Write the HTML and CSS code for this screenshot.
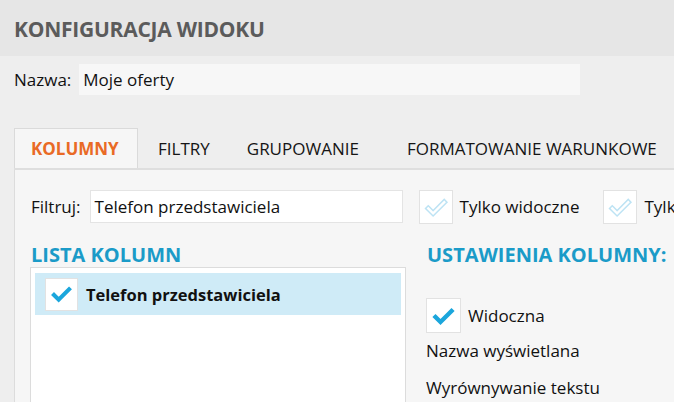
FILE: index.html
```html
<!DOCTYPE html>
<html lang="pl">
<head>
<meta charset="utf-8">
<title>Konfiguracja widoku</title>
<link rel="stylesheet" href="styles.css">
</head>
<body>
<header class="title-bar"><h1 class="title">KONFIGURACJA WIDOKU</h1></header>
<div class="name-row">
  <span class="label">Nazwa:</span>
  <div class="name-input">Moje oferty</div>
</div>
<nav class="tabs">
  <div class="tab tab-active">KOLUMNY</div>
  <div class="tab tab-filtry">FILTRY</div>
  <div class="tab tab-grup">GRUPOWANIE</div>
  <div class="tab tab-format">FORMATOWANIE WARUNKOWE</div>
</nav>
<section class="panel">
  <div class="filter-row">
    <span class="label">Filtruj:</span>
    <div class="filter-input">Telefon przedstawiciela</div>
    <span class="check check-light"><svg viewBox="0 0 33 33" width="33" height="33"><path d="M8.5 18.5 L13.5 23.5 L25 12" fill="none" stroke="#bde3f4" stroke-width="5.5" stroke-linecap="square"/><path d="M8.5 18.5 L13.5 23.5 L25 12" fill="none" stroke="#ffffff" stroke-width="2.4" stroke-linecap="square"/></svg></span>
    <span class="check-label">Tylko widoczne</span>
    <span class="check check-light check-second"><svg viewBox="0 0 33 33" width="33" height="33"><path d="M8.5 18.5 L13.5 23.5 L25 12" fill="none" stroke="#bde3f4" stroke-width="5.5" stroke-linecap="square"/><path d="M8.5 18.5 L13.5 23.5 L25 12" fill="none" stroke="#ffffff" stroke-width="2.4" stroke-linecap="square"/></svg></span>
    <span class="check-label">Tylko zaznaczone</span>
  </div>
  <div class="columns">
    <div class="col-left">
      <h2 class="section-title">LISTA KOLUMN</h2>
      <div class="list-box">
        <div class="list-row selected">
          <span class="check"><svg viewBox="0 0 33 33" width="32" height="32"><path d="M8.5 17.5 L13.5 22.5 L24.5 11.5" fill="none" stroke="#1ba6dc" stroke-width="4.4" stroke-linecap="square"/></svg></span>
          <span class="row-text">Telefon przedstawiciela</span>
        </div>
      </div>
    </div>
    <div class="col-right">
      <h2 class="section-title">USTAWIENIA KOLUMNY:</h2>
      <div class="setting-check">
        <span class="check"><svg viewBox="0 0 33 33" width="34" height="34"><path d="M8.5 17.5 L13.5 22.5 L24.5 11.5" fill="none" stroke="#1ba6dc" stroke-width="4.4" stroke-linecap="square"/></svg></span>
        <span class="check-label">Widoczna</span>
      </div>
      <div class="setting-label">Nazwa wyświetlana</div>
      <div class="setting-label setting-label-2">Wyrównywanie tekstu</div>
    </div>
  </div>
</section>
</body>
</html>
```

FILE: styles.css
```css
html, body {
  margin: 0;
  padding: 0;
}
body {
  width: 674px;
  height: 402px;
  overflow: hidden;
  background: #eeeeee;
  font-family: "Open Sans", "Noto Sans", "DejaVu Sans", sans-serif;
  color: #111111;
  font-size: 17px;
}
.title-bar {
  height: 56px;
  background: #e6e6e6;
  display: flex;
  align-items: center;
  padding-left: 14px;
}
.title {
  margin: 0;
  font-size: 21px;
  font-weight: 700;
  color: #5b5b5b;
  letter-spacing: -0.25px;
  padding-top: 2px;
  white-space: nowrap;
}
.name-row {
  display: flex;
  align-items: center;
  margin-top: 8px;
  padding-left: 14px;
  height: 31px;
}
.label {
  font-size: 17px;
  color: #111;
  flex: none;
}
.name-input {
  margin-left: 8px;
  width: 497px;
  height: 31px;
  padding-left: 4px;
  background: #f7f7f7;
  display: flex;
  align-items: center;
  font-size: 17px;
  flex: none;
}
.tabs {
  display: flex;
  margin-top: 33px;
  margin-left: 14px;
  height: 40px;
  border-bottom: 2px solid #dedede;
  white-space: nowrap;
  overflow: hidden;
}
.tab {
  display: flex;
  align-items: center;
  font-size: 17px;
  color: #151515;
  height: 40px;
  flex: none;
}
.tab-active {
  box-sizing: border-box;
  width: 124px;
  padding-left: 16px;
  background: #f6f6f6;
  border: 1px solid #dadada;
  border-bottom: none;
  color: #e96a25;
  font-weight: 700;
  height: 42px;
  margin-bottom: -2px;
  padding-bottom: 2px;
}
.tab-filtry { margin-left: 20px; }
.tab-grup { margin-left: 37px; }
.tab-format { margin-left: 48px; }
.panel {
  margin-left: 14px;
  background: #f6f6f6;
  border-left: 1px solid #dcdcdc;
  height: 213px;
  overflow: hidden;
  padding: 20px 0 0 16px;
}
.filter-row {
  display: flex;
  align-items: center;
  height: 33px;
  white-space: nowrap;
}
.filter-input {
  box-sizing: border-box;
  margin-left: 9px;
  width: 313px;
  height: 33px;
  background: #ffffff;
  border: 1px solid #e4e4e4;
  padding-left: 4px;
  display: flex;
  align-items: center;
  font-size: 17px;
  flex: none;
}
.check {
  box-sizing: border-box;
  display: inline-flex;
  align-items: center;
  justify-content: center;
  background: #ffffff;
  border: 1px solid #e2e2e2;
  flex: none;
}
.check-light {
  width: 34px;
  height: 34px;
  margin-left: 16px;
}
.check-second {
  margin-left: 24px;
}
.check-label {
  margin-left: 7px;
  font-size: 17px;
  flex: none;
}
.columns {
  display: flex;
  margin-top: 20px;
}
.col-left {
  width: 375px;
  margin-left: -1px;
  flex: none;
}
.section-title {
  margin: 0;
  font-size: 20px;
  font-weight: 700;
  color: #1b9bc8;
  line-height: 24px;
  padding-left: 1px;
  white-space: nowrap;
}
.list-box {
  box-sizing: border-box;
  margin-top: 0;
  width: 376px;
  height: 140px;
  background: #ffffff;
  border: 1px solid #dcdcdc;
  padding: 5px 4px 0 4px;
}
.list-row {
  height: 42px;
  display: flex;
  align-items: center;
  padding-left: 10px;
}
.list-row.selected {
  background: #cfebf7;
}
.list-row .check {
  width: 33px;
  height: 33px;
}
.row-text {
  margin-left: 8px;
  font-weight: 700;
  font-size: 16.5px;
}
.col-right {
  margin-left: 21px;
  flex: none;
}
.setting-check {
  display: flex;
  align-items: center;
  margin-top: 31px;
}
.setting-check .check {
  width: 35px;
  height: 35px;
}
.setting-label {
  margin-top: 7px;
  font-size: 17px;
  line-height: 22px;
  white-space: nowrap;
}
.setting-label-2 {
  margin-top: 15px;
}
```
